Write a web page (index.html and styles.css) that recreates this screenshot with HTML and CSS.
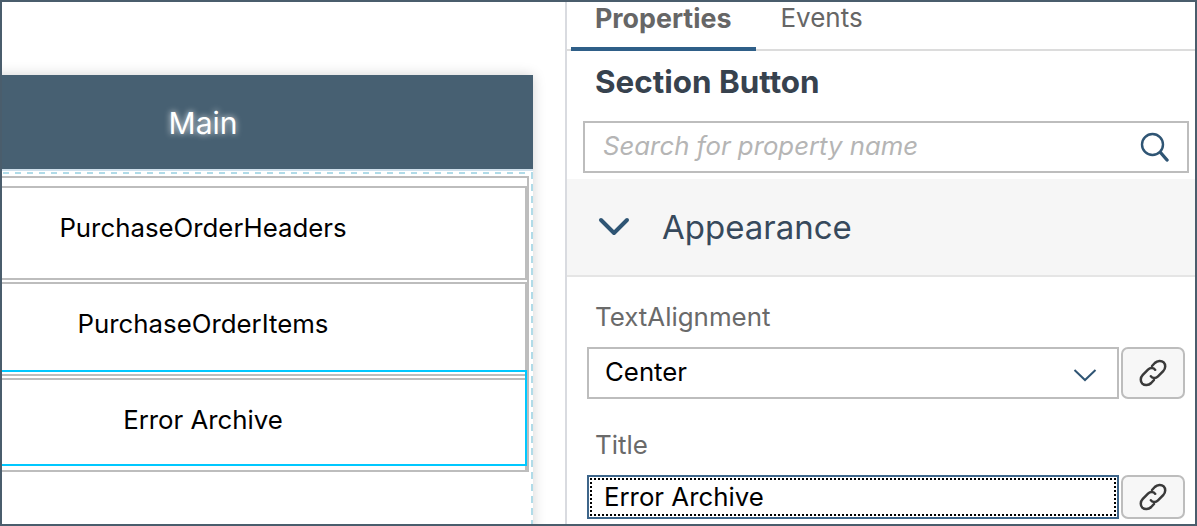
FILE: index.html
```html
<!DOCTYPE html>
<html lang="en">
<head>
    <meta charset="UTF-8">
    <title>Section Button</title>
    <link rel="stylesheet" href="styles.css">
</head>
<body>
    <div class="frame">
        <div class="canvas">
            <div class="page">
                <div class="page-header">Main</div>
                <div class="section">
                    <div class="row-list">
                        <div class="row">PurchaseOrderHeaders</div>
                        <div class="row">PurchaseOrderItems</div>
                        <div class="row row-selected">Error Archive</div>
                    </div>
                </div>
            </div>
        </div>

        <div class="panel">
            <div class="tabs">
                <div class="tab tab-active">Properties</div>
                <div class="tab">Events</div>
            </div>
            <h2 class="panel-title">Section Button</h2>
            <div class="search">
                <span class="search-text">Search for property name</span>
                <svg width="30" height="30" viewBox="0 0 30 30">
                    <circle cx="12.500" cy="12.500" r="10.500" fill="none" stroke="#2f5574" stroke-width="2.400"></circle>
                    <path d="M20.500 20.500 L27 28" stroke="#2f5574" stroke-width="3.400" stroke-linecap="round"></path>
                </svg>
            </div>
            <div class="group">
                <svg width="32" height="20" viewBox="0 0 32 20">
                    <path d="M3 3 L16 16 L29 3" fill="none" stroke="#2f5574" stroke-width="4" stroke-linecap="round" stroke-linejoin="round"></path>
                </svg>
                <span>Appearance</span>
            </div>
            <div class="fields">
                <label class="field-label">TextAlignment</label>
                <div class="field-row">
                    <div class="input select">
                        <span class="select-text">Center</span>
                        <svg class="select-arrow" width="24" height="14" viewBox="0 0 24 14">
                            <path d="M1.500 2 L12 12 L22.500 2" fill="none" stroke="#2f5574" stroke-width="2"></path>
                        </svg>
                    </div>
                    <div class="bind-btn">
                        <svg width="30" height="30" viewBox="0 0 30 30">
                            <g fill="none" stroke="#3a3a3a" stroke-width="2.500" stroke-linecap="round">
                                <path d="M14 8 L16.800 5 C19.500 2.300 23.500 2.300 25.700 4.400 C27.800 6.500 27.800 10.500 25.200 13.200 L20 18.400 C17.600 20.800 14.200 20.400 12.800 18.200"></path>
                                <path d="M16 22 L13.200 25 C10.500 27.700 6.500 27.700 4.300 25.600 C2.200 23.500 2.200 19.500 4.800 16.800 L10 11.600 C12.400 9.200 15.800 9.600 17.200 11.800"></path>
                            </g>
                        </svg>
                    </div>
                </div>
                <label class="field-label">Title</label>
                <div class="field-row field-row-short">
                    <div class="input input-focus"><span class="focus-inner">Error Archive</span></div>
                    <div class="bind-btn">
                        <svg width="30" height="30" viewBox="0 0 30 30">
                            <g fill="none" stroke="#3a3a3a" stroke-width="2.500" stroke-linecap="round">
                                <path d="M14 8 L16.800 5 C19.500 2.300 23.500 2.300 25.700 4.400 C27.800 6.500 27.800 10.500 25.200 13.200 L20 18.400 C17.600 20.800 14.200 20.400 12.800 18.200"></path>
                                <path d="M16 22 L13.200 25 C10.500 27.700 6.500 27.700 4.300 25.600 C2.200 23.500 2.200 19.500 4.800 16.800 L10 11.600 C12.400 9.200 15.800 9.600 17.200 11.800"></path>
                            </g>
                        </svg>
                    </div>
                </div>
            </div>
        </div>
    </div>
</body>
</html>
```

FILE: styles.css
```css
* {
    box-sizing: border-box;
}

html, body {
    margin: 0;
    padding: 0;
    height: 100%;
    overflow: hidden;
}

body {
    font-family: "Inter", "Liberation Sans", sans-serif;
    background-color: #fff;
}

.frame {
    display: flex;
    width: 1197px;
    height: 526px;
    border: 2px solid #4a5d6c;
    overflow: hidden;
}

/* left side: the page on the canvas, its left part is cut off by the frame */
.canvas {
    width: 563px;
    flex-shrink: 0;
    padding-top: 73px;
    background-color: #fff;
}

.page {
    width: 660px;
    height: 470px;
    margin-left: -129px;
    box-shadow: 0 0 12px rgba(0, 0, 0, 0.18);
    background-color: #fff;
}

.page-header {
    height: 96px;
    background-color: #476072;
    color: #fff;
    font-size: 30px;
    line-height: 96px;
    text-align: center;
    text-shadow: 0 0 6px rgba(255, 255, 255, 0.85);
    border-bottom: 2px solid #cfe0ec;
}

.section {
    height: 373px;
    margin-top: 1px;
    padding: 4px 4px 0 0;
    background:
        repeating-linear-gradient(to right, #b0dbe8 0 4px, transparent 4px 10px, #b0dbe8 10px 12px) top / 100% 2px no-repeat,
        repeating-linear-gradient(to bottom, #b0dbe8 0 7px, transparent 7px 12px) right / 2px 100% no-repeat;
}

.row-list {
    display: flex;
    flex-direction: column;
    gap: 2px;
    height: 296px;
    padding-top: 8px;
    border-top: 2px solid #bdbdbd;
    border-right: 2px solid #bdbdbd;
}

.row {
    flex-shrink: 0;
    height: 94px;
    padding-left: 6px;
    border: 2px solid #bdbdbd;
    font-size: 25.800px;
    line-height: 80px;
    text-align: center;
    color: #000;
    background-color: #fff;
}

.row-selected {
    position: relative;
}

/* selection outline sits over the row, a bit higher than the row itself */
.row-selected::after {
    content: "";
    box-sizing: border-box;
    position: absolute;
    top: -10px;
    left: -2px;
    right: -2px;
    height: 96px;
    border: 2px solid #00c8ff;
}

.panel {
    flex: 1;
    min-width: 0;
    border-left: 2px solid #d9dbe0;
}

.tabs {
    display: flex;
    height: 49px;
    padding-left: 4px;
    border-bottom: 2px solid #dcdcdc;
}

.tab {
    height: 49px;
    padding: 0 25px 0 24px;
    font-size: 26px;
    line-height: 32px;
    color: #666;
}

.tab-active {
    font-size: 26.800px;
    font-weight: 700;
    border-bottom: 4px solid #2f5f88;
}

.panel-title {
    margin: 0;
    padding: 13px 0 0 28px;
    height: 70px;
    font-size: 31.400px;
    line-height: 36px;
    font-weight: 700;
    color: #37424e;
}

.search {
    display: flex;
    align-items: center;
    justify-content: space-between;
    height: 52px;
    margin: 0 6px 0 16px;
    padding: 0 17px 0 18px;
    border: 2px solid #bdbdbd;
}

.search-text {
    margin-bottom: 3px;
    font-size: 25.750px;
    font-style: italic;
    color: #b5b5b5;
}

.group {
    display: flex;
    align-items: center;
    gap: 32px;
    height: 98px;
    margin-top: 6px;
    padding-left: 31px;
    background-color: #f6f6f6;
    border-bottom: 2px solid #e5e5e5;
    font-size: 33px;
    color: #36495c;
}

.fields {
    padding: 24px 10px 0 20px;
}

.field-label {
    display: block;
    padding-left: 8px;
    font-size: 25.900px;
    line-height: 32px;
    color: #6a6a6a;
}

.field-row {
    display: flex;
    gap: 2px;
    height: 52px;
    margin-top: 14px;
    margin-bottom: 30px;
}

.field-row-short {
    height: 44px;
}

.input {
    display: flex;
    align-items: center;
    justify-content: space-between;
    flex: 1;
    padding: 0 20px 0 16px;
    border: 2px solid #bdbdbd;
    font-size: 25.800px;
    color: #000;
}

.select-text {
    margin-bottom: 3px;
}

.select-arrow {
    margin-top: 4px;
}

.input-focus {
    padding: 1px;
    border-color: #3d658a;
}

/* square dots, a dotted border comes out too fine here */
.focus-inner {
    flex: 1;
    height: 100%;
    padding-left: 14px;
    line-height: 38px;
    background:
        repeating-linear-gradient(to right, #000 0 2px, transparent 2px 4px) top / 100% 2px no-repeat,
        repeating-linear-gradient(to right, #000 0 2px, transparent 2px 4px) bottom / 100% 2px no-repeat,
        repeating-linear-gradient(to bottom, #000 0 2px, transparent 2px 4px) left / 2px 100% no-repeat,
        repeating-linear-gradient(to bottom, #000 0 2px, transparent 2px 4px) right / 2px 100% no-repeat;
}

.bind-btn {
    display: flex;
    align-items: center;
    justify-content: center;
    width: 64px;
    border: 2px solid #bdbdbd;
    border-radius: 7px;
    background-color: #f7f7f7;
}
```
